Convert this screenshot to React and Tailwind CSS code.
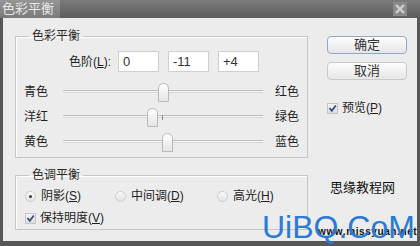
import React from "react";

const sliders = [
  { left: "青色", right: "红色", value: 0 },
  { left: "洋红", right: "绿色", value: -11 },
  { left: "黄色", right: "蓝色", value: 4 },
];

function Thumb({ value }) {
  return (
    <svg
      width="11"
      height="19"
      viewBox="0 0 11 19"
      className="absolute top-[-8px]"
      style={{ left: 100 + value - 5 }}
    >
      <defs>
        <linearGradient id="thumbg" x1="0" y1="0" x2="0" y2="1">
          <stop offset="0" stopColor="#ffffff" />
          <stop offset="1" stopColor="#e4e4e4" />
        </linearGradient>
      </defs>
      <path
        d="M0.5 18.5 V6 Q0.5 0.5 5.5 0.5 Q10.5 0.5 10.5 6 V18.5 Z"
        fill="url(#thumbg)"
        stroke="#b9b9b9"
      />
    </svg>
  );
}

function Check() {
  return (
    <span className="w-[11px] h-[11px] border border-[#c4c4c4] bg-linear-to-b from-[#f4f4f4] to-[#dedede] flex items-center justify-center">
      <svg width="9" height="9" viewBox="0 0 9 9">
        <path d="M1.5 4 L3.8 6.8 L7.8 1.5" fill="none" stroke="#2f4f86" strokeWidth="1.8" />
      </svg>
    </span>
  );
}

function Radio({ on }) {
  return (
    <span className="w-[11px] h-[11px] rounded-full border border-[#cdcdcd] bg-linear-to-b from-[#fafafa] to-[#e2e2e2] flex items-center justify-center">
      {on && <span className="w-[3px] h-[3px] rounded-full bg-[#3a3a3a]" />}
    </span>
  );
}

function Btn({ children, main }) {
  return (
    <div
      className={`w-[80px] h-[18px] rounded-[4px] border bg-linear-to-b from-[#fdfdfd] to-[#e6e6e6] flex items-center justify-center text-[13px] text-[#333] ${
        main ? "border-[#8fa9c2]" : "border-[#c9c9c9]"
      }`}
    >
      {children}
    </div>
  );
}

export default function App() {
  return (
    <div className="w-[420px] h-[246px] bg-[#575757] flex flex-col overflow-hidden relative font-['Liberation_Sans','Noto_Sans_CJK_SC',sans-serif] text-[12px] text-[#1e1e1e]">
      {/* title bar */}
      <div className="h-[18px] flex bg-linear-to-b from-[#7c7c7c] to-[#5b5b5b]">
        <div className="w-[60px] bg-linear-to-b from-[#959595] to-[#7a7a7a] text-[13px] leading-[18px] text-[#e8e8e8] pl-[2px]">
          色彩平衡
        </div>
        <div className="flex-1" />
        <svg width="14" height="14" viewBox="0 0 14 14" className="mt-[2px] mr-[13px]">
          <rect x="0" y="0" width="14" height="14" fill="#8a8a8a" />
          <path d="M3 3 L11 11 M11 3 L3 11" stroke="#cfcfcf" strokeWidth="2.4" />
        </svg>
      </div>

      {/* body */}
      <div className="flex-1 mx-[3px] mb-[5px] bg-[#ececec] flex pt-[10px] pl-[12px]">
        <div className="w-[293px] flex flex-col">
          <fieldset className="h-[130px] border border-[#c6c6c6] shadow-[inset_1px_1px_0_#fff]">
            <legend className="ml-[13px] px-[3px] text-[12px] leading-[16px] text-[#2a2a2a]">色彩平衡</legend>
            <div className="mt-[7px] flex items-center h-[21px]">
              <span className="w-[95px] text-right">
                色阶(<span className="underline">L</span>):
              </span>
              {["0", "-11", "+4"].map((v, i) => (
                <div
                  key={i}
                  className={`w-[41px] h-[21px] bg-white border border-[#cfcfcf] text-[13px] text-[#333] leading-[19px] pl-[4px] ${
                    i === 0 ? "ml-[7px]" : "ml-[9px]"
                  }`}
                >
                  {v}
                </div>
              ))}
            </div>
            <div className="mt-[7px] flex flex-col">
              {sliders.map((s) => (
                <div key={s.left} className="h-[25px] flex items-center pl-[8px]">
                  <span className="w-[39px]">{s.left}</span>
                  <div className="relative w-[200px] h-[3px] border-t border-[#bdbdbd] bg-[#f6f6f6] border-b border-b-[#d8d8d8]">
                    <span className="absolute left-[99px] top-[-1px] w-px h-[5px] bg-[#8c8c8c]" />
                    <Thumb value={s.value} />
                  </div>
                  <span className="ml-[12px]">{s.right}</span>
                </div>
              ))}
            </div>
          </fieldset>

          <fieldset className="mt-[9px] h-[63px] border border-[#c6c6c6] shadow-[inset_1px_1px_0_#fff]">
            <legend className="ml-[13px] px-[3px] text-[12px] leading-[16px] text-[#2a2a2a]">色调平衡</legend>
            <div className="mt-[2px] h-[22px] flex items-center pl-[9px]">
              <div className="w-[90px] flex items-center gap-[5px]">
                <Radio on />
                <span>
                  阴影(<span className="underline">S</span>)
                </span>
              </div>
              <div className="w-[102px] flex items-center gap-[5px]">
                <Radio />
                <span>
                  中间调(<span className="underline">D</span>)
                </span>
              </div>
              <div className="flex items-center gap-[5px]">
                <Radio />
                <span>
                  高光(<span className="underline">H</span>)
                </span>
              </div>
            </div>
            <div className="h-[22px] flex items-center pl-[9px] gap-[4px]">
              <Check />
              <span>
                保持明度(<span className="underline">V</span>)
              </span>
            </div>
          </fieldset>
        </div>

        <div className="ml-[19px] pt-[8px] w-[80px] flex flex-col">
          <Btn main>确定</Btn>
          <div className="mt-[8px]">
            <Btn>取消</Btn>
          </div>
          <div className="mt-[19px] flex items-center gap-[4px]">
            <Check />
            <span>
              预览(<span className="underline">P</span>)
            </span>
          </div>
        </div>
      </div>

      {/* watermark */}
      <div className="absolute left-[330px] top-[180px] text-[13px] leading-[16px] text-[#111]">思缘教程网</div>
      <div className="absolute left-[318px] top-[226px] text-[10px] leading-[12px] font-bold tracking-[0.6px] text-[#111]">
        www.missyuan.net
      </div>
      <div className="absolute left-[262px] top-[207px] text-[32px] leading-[40px] text-[#2b7ad3]">UiBQ.CoM</div>
    </div>
  );
}
